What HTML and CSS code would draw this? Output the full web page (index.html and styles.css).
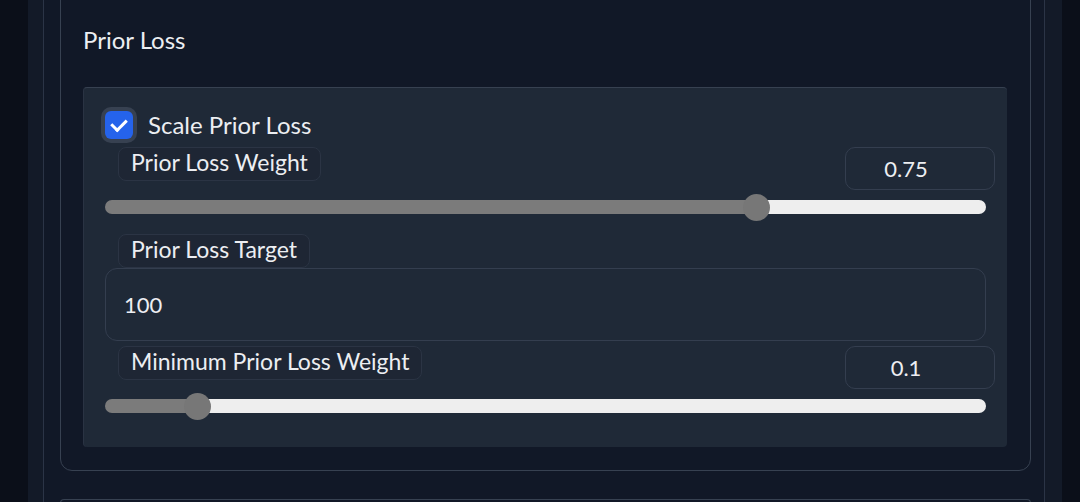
FILE: index.html
```html
<!DOCTYPE html>
<html lang="en">
<head>
  <meta charset="UTF-8">
  <title>Prior Loss</title>
  <link rel="stylesheet" href="styles.css">
</head>
<body>
  <div class="column">
    <div class="panel">

      <div class="box">
        <div class="box-title">Prior Loss</div>

        <div class="block">
          <label class="check-row">
            <input type="checkbox" checked>
            <span>Scale Prior Loss</span>
          </label>

          <div class="slider-group">
            <div class="group-head">
              <span class="badge">Prior Loss Weight</span>
              <input class="num" type="number" value="0.75">
            </div>
            <input class="range" type="range" min="0" max="1" step="any" value="0.747" style="--pct: 74%">
          </div>

          <div class="text-group">
            <span class="badge">Prior Loss Target</span>
            <input class="text" type="text" value="100">
          </div>

          <div class="slider-group">
            <div class="group-head">
              <span class="badge">Minimum Prior Loss Weight</span>
              <input class="num" type="number" value="0.1">
            </div>
            <input class="range" type="range" min="0" max="1" step="any" value="0.092" style="--pct: 10%">
          </div>
        </div>
      </div>

      <div class="box next"></div>

    </div>
  </div>
</body>
</html>
```

FILE: styles.css
```css
body { margin: 0; background: #0b0f19; font-family: "Lato", sans-serif; color: #eceef2; overflow: hidden; }

.column {
  margin-left: 28px;
  width: 1034px;
  height: 502px;
  background: #131a28;
  padding: 0 17px 0 15px;
  box-sizing: border-box;
  display: flow-root;
  overflow: hidden;
}
.panel {
  height: 100%;
  background: #111827;
  border-left: 1px solid #2b3446;
  border-right: 1px solid #2b3446;
  padding: 0 13px 0 16px;
  display: flow-root;
}

.box {
  border: 1px solid #374151;
  border-radius: 12px;
  margin-top: -20px;
  padding: 44px 23px 23px 22px;
}
.box.next { margin-top: 28px; height: 3px; padding: 0; border-bottom: none; border-radius: 12px 12px 0 0; }

.box-title { font-size: 24px; line-height: 30px; margin-bottom: 32px; }

.block {
  background: #1f2937;
  border-top: 1px solid #374151;
  border-left: 1px solid #2a3343;
  border-radius: 4px;
  padding: 22px 21px 34px 21px;
}

.check-row { display: flex; align-items: center; gap: 15px; font-size: 24px; }
.check-row input {
  appearance: none;
  -webkit-appearance: none;
  margin: 0;
  width: 28px;
  height: 28px;
  border-radius: 6px;
  background: #2563eb;
  box-shadow: 0 0 0 4px #374151;
  position: relative;
}
.check-row input:checked::after {
  content: "";
  position: absolute;
  left: 9px;
  top: 5px;
  width: 7px;
  height: 12px;
  border: solid #fff;
  border-width: 0 3px 3px 0;
  transform: rotate(45deg);
}

.badge {
  display: inline-block;
  font-size: 23px;
  line-height: 29px;
  padding: 0 12px 3px;
  border: 1px solid #2b3444;
  border-radius: 8px;
  background: #1e2634;
  margin-left: 13px;
}

.slider-group { margin-top: 8px; }
.group-head { display: flex; justify-content: space-between; align-items: flex-start; margin-right: -9px; }
.num {
  width: 150px;
  height: 43px;
  box-sizing: border-box;
  background: #1f2937;
  border: 1px solid #343e4f;
  border-radius: 10px;
  color: #eceef2;
  font: 22px "Lato", sans-serif;
  text-align: center;
  padding: 0 28px 0 0;
  -moz-appearance: textfield;
}
.num::-webkit-inner-spin-button { -webkit-appearance: none; }

.range {
  -webkit-appearance: none;
  appearance: none;
  display: block;
  width: 100%;
  height: 14px;
  margin: 10px 0 0;
  border-radius: 7px;
  background: linear-gradient(to right, #7b7b7b var(--pct), #eeeeee var(--pct));
}
.range::-webkit-slider-thumb {
  -webkit-appearance: none;
  width: 27px;
  height: 27px;
  border-radius: 50%;
  background: #777777;
}

.text-group { margin-top: 20px; }
.text {
  display: block;
  width: 100%;
  height: 73px;
  box-sizing: border-box;
  background: #1f2937;
  border: 1px solid #343e4f;
  border-radius: 12px;
  color: #eceef2;
  font: 22px "Lato", sans-serif;
  padding: 0 18px;
}
.text-group + .slider-group { margin-top: 5px; }
```
